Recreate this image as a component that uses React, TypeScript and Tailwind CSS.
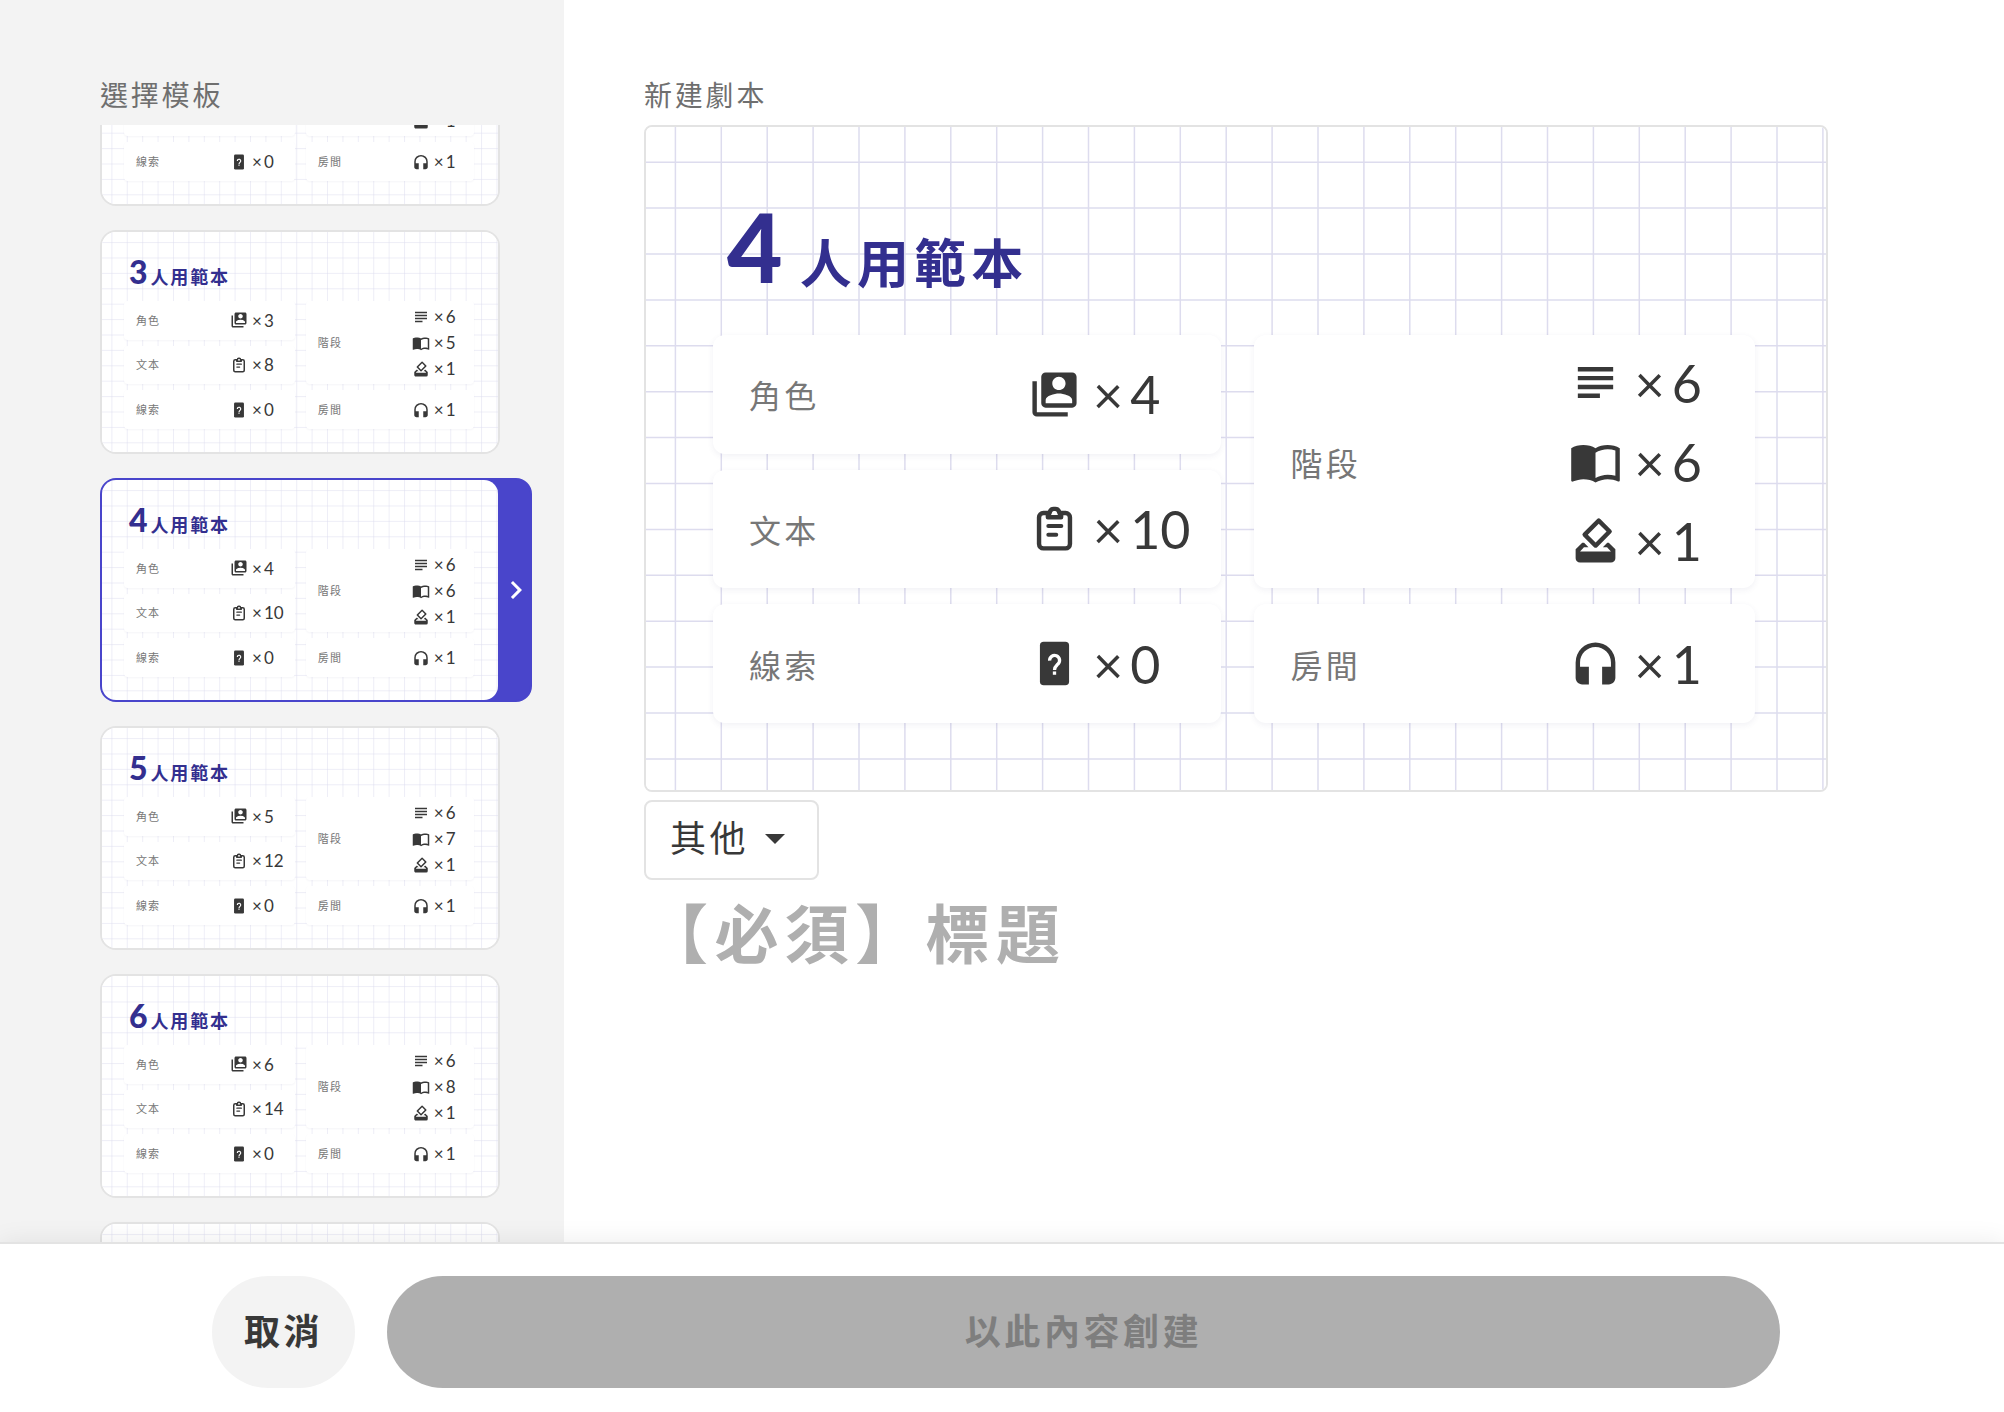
import { useLayoutEffect, useRef, type ReactNode } from "react";
import { MdSwitchAccount, MdSubject, MdImportContacts, MdHowToVote, MdHeadset, MdChevronRight } from "react-icons/md";

type Size = "large" | "small";

const styles = {
  large: {
    body: "pt-[71px] pl-[67px] pr-[71px]",
    title: "h-[137px] pl-[14px] gap-[17px]",
    number: "text-[96px] leading-[96px]",
    name: "text-[52px] leading-[52px]",
    grid: "h-[388px] gap-x-[33px] gap-y-4",
    cell: "pl-9 rounded-xl shadow-[0_2px_6px_rgba(60,60,120,0.07)]",
    label: "w-[279px] pt-1 text-[32px]",
    row: "h-[79px] gap-3 text-[52px]",
    value: "gap-[7px]",
    icon: "size-[53px]",
  },
  small: {
    body: "pt-6 pl-[22px] pr-6",
    title: "h-[45px] pl-[5px] gap-[3px]",
    number: "text-[32px] leading-[32px]",
    name: "text-[18px] leading-[18px]",
    grid: "h-[128px] gap-x-[11px] gap-y-[6px]",
    cell: "pl-3 rounded-sm shadow-[0_1px_2px_rgba(60,60,120,0.05)]",
    label: "w-[94px] text-[11px]",
    row: "h-[26px] gap-1 text-[17px]",
    value: "gap-0.5",
    icon: "size-[18px]",
  },
};

function ClipboardIcon() {
  return (
    <svg viewBox="0 0 24 24" className="size-full" fill="none" stroke="currentColor" strokeWidth="2" strokeLinecap="round" strokeLinejoin="round">
      <path d="M9 5H7a2 2 0 0 0-2 2v12a2 2 0 0 0 2 2h10a2 2 0 0 0 2-2V7a2 2 0 0 0-2-2h-2" />
      <path d="M9 6.900V5.200h.700C9.900 4 10.600 3.100 11.600 3.100h.8c1 0 1.700.900 1.900 2.100h.7v1.700z" />
      <path d="M9.200 10.900h5.900M9.200 14.800h3.600" strokeWidth="1.800" />
    </svg>
  );
}

function ClueIcon() {
  return (
    <svg viewBox="0 0 24 24" className="size-full">
      <rect x="5.400" y="2.100" width="13.200" height="19.800" rx="1.700" fill="currentColor" />
      <path d="M9.800 10.700a2.250 2.250 0 1 1 3.800 1.500c-.8.800-1.600 1.300-1.600 2.700" fill="none" stroke="#fff" strokeWidth="1.500" />
      <rect x="11.250" y="15.600" width="1.500" height="1.500" fill="#fff" />
    </svg>
  );
}

function GridPaper() {
  const columns = Array.from({ length: 26 }, (_, i) => 29.4 + i * 45.9);
  const rows = Array.from({ length: 14 }, (_, i) => 35.2 + i * 45.9);
  return (
    <svg aria-hidden="true" viewBox="0 0 1180 663" preserveAspectRatio="xMidYMid slice" className="absolute inset-0 size-full">
      <g stroke="#dddcee" strokeWidth="1.500">
        {columns.map((x) => (
          <line key={x} x1={x} x2={x} y1="0" y2="663" />
        ))}
        {rows.map((y) => (
          <line key={y} x1="0" x2="1180" y1={y} y2={y} />
        ))}
      </g>
    </svg>
  );
}

function Count({ size, icon, value }: { size: Size; icon: ReactNode; value: number }) {
  const s = styles[size];
  return (
    <span className={`flex items-center text-[#383838] ${s.row}`}>
      <span className={`shrink-0 [&>svg]:size-full ${s.icon}`}>{icon}</span>
      <span className={`flex leading-none ${s.value}`}>
        <span>×</span>
        <span>{value}</span>
      </span>
    </span>
  );
}

function Cell({ size, label, className = "", children }: { size: Size; label: string; className?: string; children: ReactNode }) {
  const s = styles[size];
  return (
    <span className={`flex min-h-0 items-center bg-white ${s.cell} ${className}`}>
      <span className={`shrink-0 leading-none tracking-widest text-[#777] ${s.label}`}>{label}</span>
      <span className="flex flex-col">{children}</span>
    </span>
  );
}

function TemplateSheet({ size, players }: { size: Size; players: number }) {
  const s = styles[size];
  return (
    <span className="relative block size-full overflow-hidden bg-white text-left">
      <GridPaper />
      <span className={`relative block ${s.body}`}>
        <span className={`flex items-baseline text-[#332f8f] ${s.title}`}>
          <span className={`font-black ${s.number}`}>{players}</span>
          <span className={`font-bold tracking-widest ${s.name}`}>人用範本</span>
        </span>
        <span className={`grid grid-flow-col grid-cols-[509fr_501fr] grid-rows-3 ${s.grid}`}>
          <Cell size={size} label="角色">
            <Count size={size} icon={<MdSwitchAccount />} value={players} />
          </Cell>
          <Cell size={size} label="文本">
            <Count size={size} icon={<ClipboardIcon />} value={players * 2 + 2} />
          </Cell>
          <Cell size={size} label="線索">
            <Count size={size} icon={<ClueIcon />} value={0} />
          </Cell>
          <Cell size={size} label="階段" className="row-span-2">
            <Count size={size} icon={<MdSubject />} value={6} />
            <Count size={size} icon={<MdImportContacts />} value={players + 2} />
            <Count size={size} icon={<MdHowToVote />} value={1} />
          </Cell>
          <Cell size={size} label="房間">
            <Count size={size} icon={<MdHeadset viewBox="0 -1.5 24 24" />} value={1} />
          </Cell>
        </span>
      </span>
    </span>
  );
}

function TemplateCard({ players, selected }: { players: number; selected: boolean }) {
  if (selected) {
    return (
      <button type="button" aria-pressed="true" className="flex h-56 w-[432px] shrink-0 items-center rounded-2xl border-2 border-[#4945cb] bg-[#4945cb]">
        <span className="block h-full w-[396px] shrink-0 overflow-hidden rounded-[14px]">
          <TemplateSheet size="small" players={players} />
        </span>
        <MdChevronRight className="size-9 shrink-0 text-white" />
      </button>
    );
  }
  return (
    <button type="button" aria-pressed="false" className="block h-56 w-[400px] shrink-0 overflow-hidden rounded-2xl border-2 border-[#e3e3e3] bg-white">
      <TemplateSheet size="small" players={players} />
    </button>
  );
}

export default function App() {
  const list = useRef<HTMLDivElement>(null);
  useLayoutEffect(() => {
    if (list.current) list.current.scrollTop = 143;
  }, []);

  return (
    <div className="flex h-screen flex-col bg-white font-['Lato','Noto_Sans_CJK_TC',sans-serif] text-[#383838]">
      <div className="flex min-h-0 flex-1">
        <aside className="flex w-[564px] shrink-0 flex-col bg-[#f3f3f3] pt-[75px] pl-[100px]">
          <h2 className="h-[50px] shrink-0 text-[28px] leading-[40px] tracking-widest text-[#6f6f6f]">選擇模板</h2>
          <div ref={list} className="flex min-h-0 flex-1 flex-col gap-6 overflow-y-auto [scrollbar-width:none]">
            {[2, 3, 4, 5, 6, 7].map((players) => (
              <TemplateCard key={players} players={players} selected={players === 4} />
            ))}
          </div>
        </aside>
        <main className="flex min-w-0 flex-1 flex-col items-start pt-[75px] pr-[176px] pl-20">
          <h2 className="h-[50px] shrink-0 text-[28px] leading-[40px] tracking-widest text-[#6f6f6f]">新建劇本</h2>
          <div className="aspect-[1184/667] w-full overflow-hidden rounded-lg border-2 border-[#e3e3e3]">
            <TemplateSheet size="large" players={4} />
          </div>
          <div className="relative mt-2">
            <select aria-label="類型" className="h-20 w-[175px] appearance-none rounded-lg border-2 border-[#e3e3e3] bg-white pb-1 pl-6 text-[36px] leading-[40px] tracking-widest">
              <option>其他</option>
            </select>
            <svg aria-hidden="true" viewBox="0 0 20 10" className="pointer-events-none absolute top-[34px] right-[34px] h-[10px] w-5" fill="#383838">
              <path d="M0 0h20L10 10z" />
            </svg>
          </div>
          <input
            aria-label="標題"
            placeholder="【必須】標題"
            className="mt-[6px] h-24 w-full text-[64px] font-bold tracking-widest outline-none placeholder:text-[#afafaf]"
          />
        </main>
      </div>
      <footer className="relative border-t-2 border-[#e3e3e3] bg-white pt-8 pr-3 pb-6 shadow-[0_0_24px_rgba(0,0,0,0.08)]">
        <div className="mx-auto flex w-full max-w-[1568px] gap-8">
          <button type="button" className="h-28 w-[143px] shrink-0 rounded-full bg-[#f3f3f3] pb-0.5 text-[36px] font-bold tracking-widest">
            取消
          </button>
          <button type="button" disabled className="h-28 flex-1 rounded-full bg-[#afafaf] pb-0.5 text-[36px] font-bold tracking-widest text-[#7e7e7e]">
            以此內容創建
          </button>
        </div>
      </footer>
    </div>
  );
}
